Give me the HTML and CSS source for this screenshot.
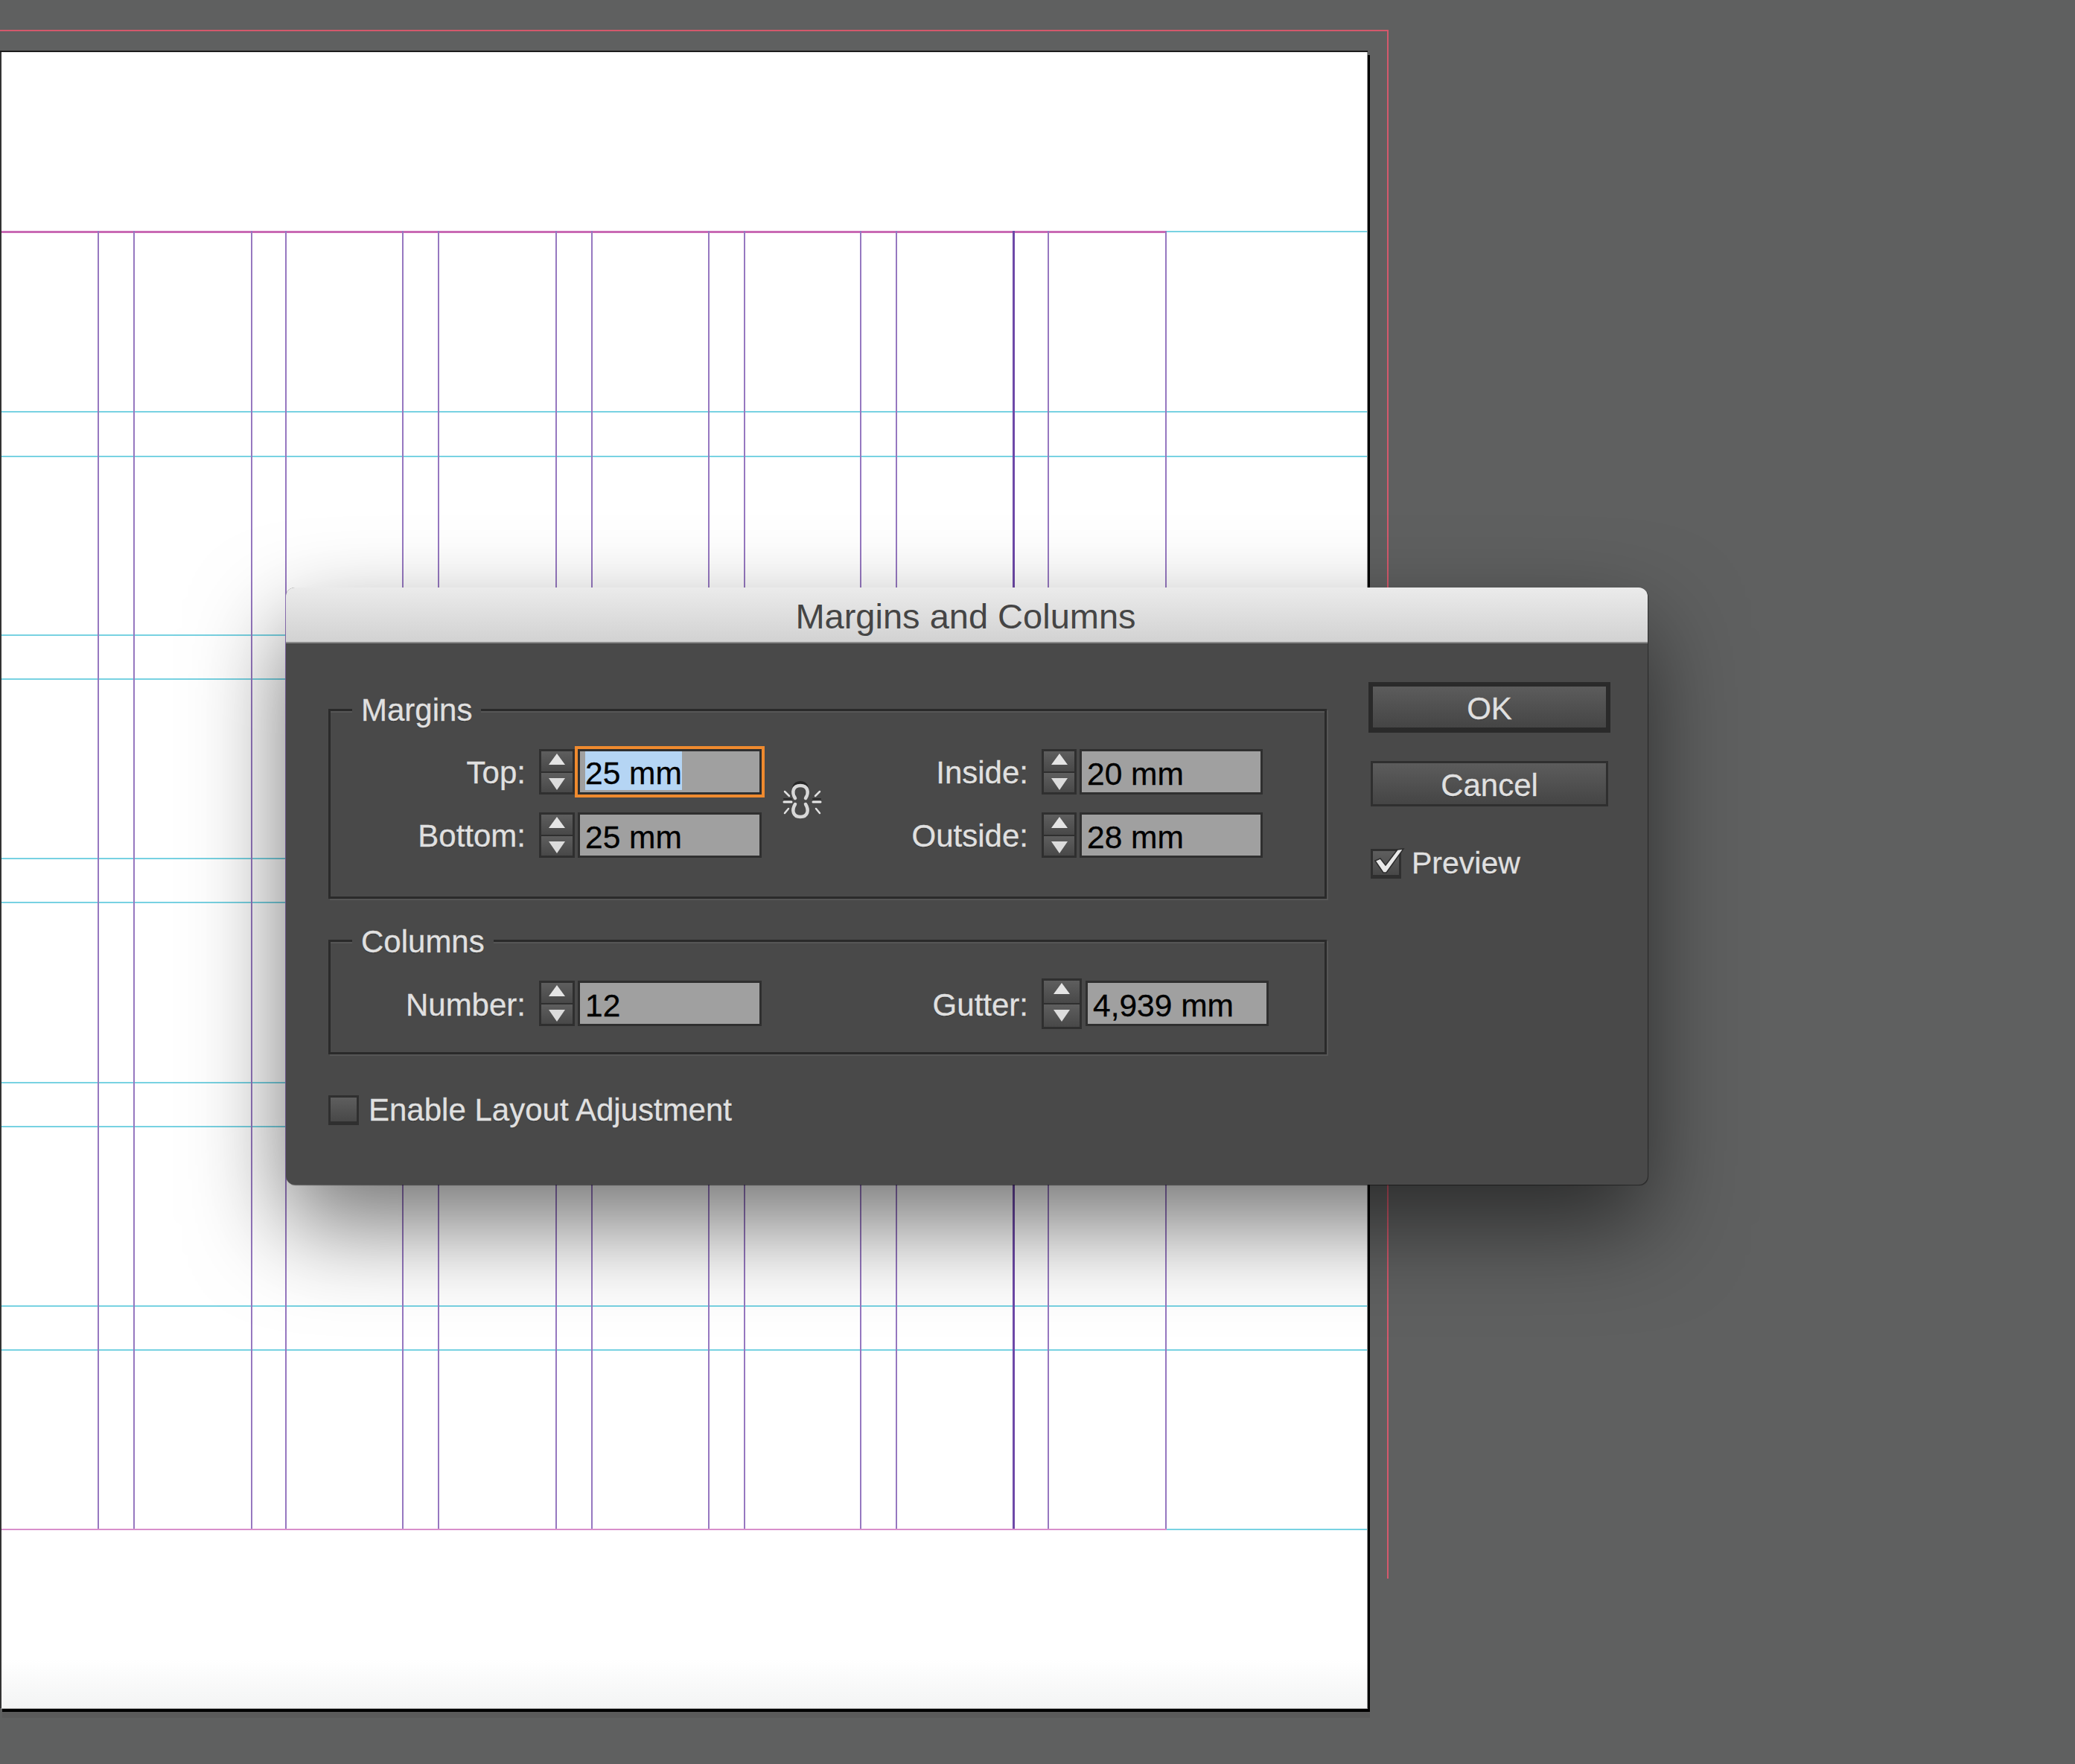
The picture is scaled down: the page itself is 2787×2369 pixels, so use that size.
FILE: index.html
```html
<!DOCTYPE html>
<html lang="en">
<head>
    <meta charset="UTF-8">
    <title>Margins and Columns</title>
    <link rel="stylesheet" href="styles.css">
</head>
<body>
    <div class="bleed"></div>
    <div class="sheet">
        <div class="fade"></div>
        <i class="row" style="top:240px"></i><i class="row" style="top:1983px"></i>
        <i class="row" style="top:482px"></i><i class="row" style="top:542px"></i>
        <i class="row" style="top:782px"></i><i class="row" style="top:841px"></i>
        <i class="row" style="top:1082px"></i><i class="row" style="top:1141px"></i>
        <i class="row" style="top:1383px"></i><i class="row" style="top:1442px"></i>
        <i class="row" style="top:1683px"></i><i class="row" style="top:1742px"></i>
        <i class="margin-line" style="top:240px"></i><i class="margin-line soft" style="top:1983px"></i>
        <i class="col" style="left:129px"></i><i class="col" style="left:177px"></i>
        <i class="col" style="left:335px"></i><i class="col" style="left:381px"></i>
        <i class="col" style="left:538px"></i><i class="col" style="left:586px"></i>
        <i class="col" style="left:744px"></i><i class="col" style="left:792px"></i>
        <i class="col" style="left:949px"></i><i class="col" style="left:997px"></i>
        <i class="col" style="left:1153px"></i><i class="col" style="left:1201px"></i>
        <i class="col spine" style="left:1358px"></i><i class="col" style="left:1405px"></i>
        <i class="col" style="left:1563px"></i>
    </div>

    <div class="dialog">
        <div class="titlebar">Margins and Columns</div>
        <div class="dialog-body">
            <div class="left">
                <fieldset class="margins">
                    <legend>Margins</legend>
                    <div class="spin-col first">
                        <div class="spin">
                            <label>Top:</label>
                            <div class="stepper"><b class="up"></b><b class="down"></b></div>
                            <div class="field focus"><span class="sel">25 mm</span></div>
                        </div>
                        <div class="spin">
                            <label>Bottom:</label>
                            <div class="stepper"><b class="up"></b><b class="down"></b></div>
                            <div class="field">25 mm</div>
                        </div>
                    </div>
                    <div class="link-col">
                        <svg class="link" width="75" height="70" viewBox="0 0 75 70">
                            <g fill="none" stroke-linecap="round">
                                <path d="M27 28 C24 20 26 11 35 11 C44 11 46 20 43 28" stroke="#262626" stroke-width="4"/>
                                <path d="M13 33 H23 M52 33 H62" stroke="#2a2a2a" stroke-width="2"/>
                                <path d="M28 32 C23 24 25 15 35 15 C45 15 47 24 42 32 M28 40 C23 48 25 57 35 57 C45 57 47 48 42 40" stroke="#d8d8d8" stroke-width="4.5"/>
                                <path d="M13 37 H23 M52 37 H62" stroke="#e8e8e8" stroke-width="3"/>
                                <path d="M14 23 L20 29 M14 52 L19 46 M61 23 L55 29 M61 52 L56 46" stroke="#e0e0e0" stroke-width="2.5"/>
                            </g>
                        </svg>
                    </div>
                    <div class="spin-col second">
                        <div class="spin">
                            <label>Inside:</label>
                            <div class="stepper"><b class="up"></b><b class="down"></b></div>
                            <div class="field">20 mm</div>
                        </div>
                        <div class="spin">
                            <label>Outside:</label>
                            <div class="stepper"><b class="up"></b><b class="down"></b></div>
                            <div class="field">28 mm</div>
                        </div>
                    </div>
                </fieldset>

                <fieldset class="columns">
                    <legend>Columns</legend>
                    <div class="spin-col first">
                        <div class="spin">
                            <label>Number:</label>
                            <div class="stepper"><b class="up"></b><b class="down"></b></div>
                            <div class="field">12</div>
                        </div>
                    </div>
                    <div class="link-col"></div>
                    <div class="spin-col second">
                        <div class="spin">
                            <label>Gutter:</label>
                            <div class="stepper tall"><b class="up"></b><b class="down"></b></div>
                            <div class="field wide">4,939 mm</div>
                        </div>
                    </div>
                </fieldset>

                <div class="check-row adjust">
                    <span class="box"></span>
                    <span>Enable Layout Adjustment</span>
                </div>
            </div>

            <div class="actions">
                <div class="btn default">OK</div>
                <div class="btn">Cancel</div>
                <div class="check-row preview">
                    <span class="box">
                        <svg class="tick" width="50" height="40" viewBox="0 -2 50 40">
                            <path d="M6 16 L13 13 L20 22 L36 1 L44 0 L21 32 L17 32 Z" fill="#e8e8e8" stroke="#2c2c2c" stroke-width="1.5"/>
                        </svg>
                    </span>
                    <span>Preview</span>
                </div>
            </div>
        </div>
    </div>
</body>
</html>
```

FILE: styles.css
```css
html, body {
    margin: 0;
    height: 100%;
}
body {
    position: relative;
    width: 2787px;
    height: 2369px;
    overflow: hidden;
    background: #5f6060;
    font-family: "Liberation Sans", Arial, sans-serif;
}

/* document page */
.bleed {
    position: absolute;
    left: 0;
    top: 40px;
    width: 1865px;
    height: 2080px;
    border-top: 2px solid #d4596c;
    border-right: 2px solid #d4596c;
    box-sizing: border-box;
}
.sheet {
    position: absolute;
    left: 0;
    top: 70px;
    width: 1837px;
    height: 2225px;
    background: #fff;
    border-left: 2px solid #333;
    border-right: 1px solid #9a9a9a;
    border-bottom: 1px solid #aaa;
    box-sizing: border-box;
    box-shadow: 0 -2px 0 #1b1b1b, 3px 4px 0 #000, 3px 12px 0 #5a5a5a;
}
.fade {
    position: absolute;
    left: 0;
    right: 0;
    bottom: 0;
    height: 65px;
    background: linear-gradient(#fff, #f3f4f4);
}
.col {
    position: absolute;
    top: 240px;
    height: 1743px;
    width: 2px;
    background: #9678c0;
}
.col.spine {
    width: 3px;
    background: #6e49a8;
}
.row {
    position: absolute;
    left: 0;
    right: 0;
    height: 2px;
    background: #78d2e2;
}
.margin-line {
    position: absolute;
    left: 0;
    width: 1565px;
    height: 3px;
    background: #c96ab4;
}
.margin-line.soft {
    height: 2px;
    background: #d88fcb;
}

/* dialog */
.dialog {
    position: absolute;
    left: 384px;
    top: 789px;
    width: 1829px;
    height: 802px;
    background: #494949;
    border-radius: 12px;
    box-shadow: 1px 1px 1px rgba(0, 0, 0, 0.45), 0 54px 126px rgba(0, 0, 0, 0.55);
}
.titlebar {
    height: 75px;
    box-sizing: border-box;
    padding: 3px 3px 0 0;
    border-radius: 12px 12px 0 0;
    border-bottom: 2px solid #8a8a8a;
    background: linear-gradient(#ebebeb, #d2d2d2);
    color: #454545;
    font-size: 47px;
    line-height: 71px;
    text-align: center;
}
.dialog-body {
    display: flex;
    padding: 52px 0 0 57px;
    color: #e0e0e0;
    font-size: 42px;
    -webkit-text-stroke: 0.3px;
    text-shadow: 0 1px 1px rgba(0, 0, 0, 0.35);
}
.left {
    width: 1341px;
    margin-top: 13px;
}

fieldset {
    display: flex;
    margin: 0;
    padding: 29px 0 0;
    border: 3px solid #2a2a2a;
    box-shadow: inset 0 2px 0 #565656, 2px 2px 0 #565656;
}
legend {
    margin-left: 29px;
    padding: 0 12px;
    height: 48px;
    line-height: 50px;
    background: #494949;
}
.margins {
    height: 278px;
    box-sizing: border-box;
}
.columns {
    height: 177px;
    margin-top: 32px;
    box-sizing: border-box;
    padding-top: 30px;
}
.columns legend {
    line-height: 52px;
}

.spin-col {
    display: flex;
    flex-direction: column;
    gap: 24px;
}
.first {
    width: 579px;
}
.second {
    width: 566px;
}
.link-col {
    width: 107px;
    height: 146px;
    display: flex;
    align-items: center;
    justify-content: center;
}
.link {
    flex: none;
    margin: -8px -10px 0 -8px;
}
.spin {
    display: flex;
    align-items: center;
    height: 61px;
}
.spin label {
    flex: 1;
    margin-right: 18px;
    padding-top: 3px;
    text-align: right;
}
.columns .spin label {
    padding-top: 4px;
}
.stepper {
    flex: none;
    display: flex;
    flex-direction: column;
    gap: 2px;
    width: 48px;
    height: 61px;
    box-sizing: border-box;
    margin-right: 4px;
    background: #2f2f2f;
    border: 3px solid #2f2f2f;
}
.second .stepper {
    width: 47px;
}
.second .stepper.tall {
    width: 54px;
    height: 68px;
    margin-right: 5px;
}
.stepper b {
    position: relative;
    flex: 1;
    background: linear-gradient(#5e5e5e, #484848);
}
.stepper b::after {
    content: "";
    position: absolute;
    left: 50%;
    margin-left: -11px;
    border-left: 11px solid transparent;
    border-right: 11px solid transparent;
}
.stepper .up::after {
    top: 3px;
    border-bottom: 15px solid #e4e4e4;
}
.stepper .down::after {
    top: 7px;
    border-top: 16px solid #dcdcdc;
}
.field {
    flex: none;
    width: 247px;
    height: 61px;
    box-sizing: border-box;
    padding-left: 7px;
    border: 3px solid #2f2f2f;
    background: #a0a0a0;
    color: #000;
    font-size: 42.5px;
    line-height: 61px;
    text-shadow: none;
    -webkit-text-stroke: 0.3px #000;
}
.second .field {
    width: 246px;
}
.second .field.wide {
    margin-right: -8px;
}
.field.focus {
    outline: 4px solid #ef8a2e;
}
.sel {
    display: inline-block;
    height: 52px;
    line-height: 59px;
    background: #b5d5f4;
    vertical-align: top;
}

.check-row {
    display: flex;
    align-items: center;
}
.adjust {
    margin-top: 51px;
    gap: 13px;
}
.box {
    flex: none;
    position: relative;
    width: 41px;
    height: 40px;
    box-sizing: border-box;
    border: 3px solid #2f2f2f;
    border-bottom-width: 5px;
    background: linear-gradient(#5e5e5e, #484848);
}
.tick {
    position: absolute;
    left: -3px;
    top: -5px;
}

.actions {
    margin-left: 56px;
    width: 325px;
    display: flex;
    flex-direction: column;
    align-items: center;
}
.btn {
    width: 319px;
    height: 61px;
    box-sizing: border-box;
    border: 3px solid #2f2f2f;
    background: linear-gradient(#5c5c5c, #454545);
    text-align: center;
    line-height: 60px;
}
.btn.default {
    width: 325px;
    height: 68px;
    margin-bottom: 38px;
    border: 6px solid #2a2a2a;
    border-bottom-width: 7px;
}
.preview {
    align-self: flex-start;
    margin: 53px 0 0 3px;
    gap: 14px;
    font-size: 41px;
}
```
